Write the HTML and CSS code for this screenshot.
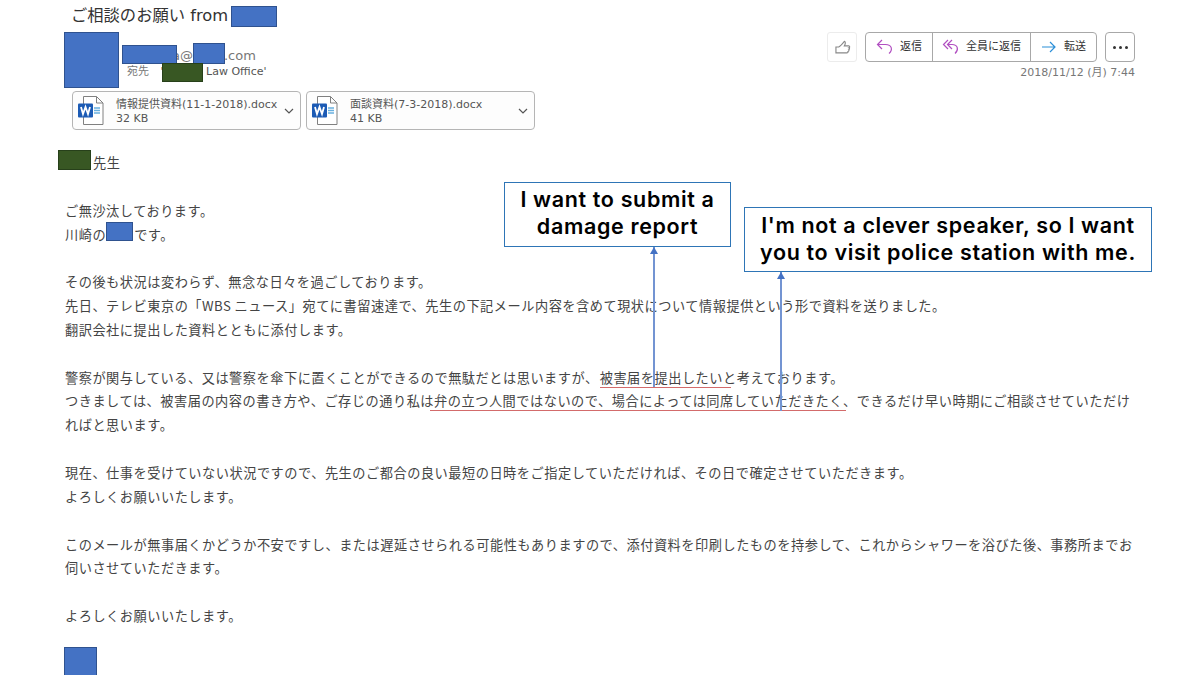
FILE: index.html
```html
<!DOCTYPE html>
<html lang="ja">
<head>
    <meta charset="UTF-8">
    <title>ご相談のお願い</title>
    <link rel="stylesheet" href="styles.css">
</head>
<body>

    <h1>ご相談のお願い from <span class="mask mask-title"></span></h1>

    <header>
        <div class="avatar mask"></div>
        <div class="sender">
            <div class="address">a@<span class="domain">.com</span></div>
            <div class="to">宛先 <span class="office">' <b>Law Office'</b></span></div>
            <span class="mask mask-user"></span>
            <span class="mask mask-domain"></span>
            <span class="mask green mask-office"></span>
        </div>
        <div class="actions">
            <div class="buttons">
                <button class="like">
                    <svg width="17" height="15" viewBox="0 0 18 16"><path d="M2 7.500h3c2-1 4-3.500 6-6 1.500.5 1.200 2.500 0 4.700h4.500c1.500.2 1.500 1.900.4 2.200 1 .5.700 1.800-.3 2 .6.700.2 1.700-.8 1.800.3 1-.2 1.500-1.200 1.500H2z"/></svg>
                </button>
                <div class="group">
                    <button class="reply">
                        <svg width="17" height="16" viewBox="0 0 17 16"><path d="M6 1 1.500 5.500 6 10M1.500 5.500h8c6.500 0 7.500 5.500 3.500 9"/></svg>返信
                    </button>
                    <button class="reply-all">
                        <svg width="17" height="16" viewBox="0 0 17 16"><path d="M6 1 1.500 5.500 6 10M10 1 5.500 5.500 10 10M5.500 5.500h4.500c6 0 7 5.500 3 9"/></svg>全員に返信
                    </button>
                    <button class="forward">
                        <svg width="16" height="12" viewBox="0 0 16 12"><path d="M1 6h13M9 1l5 5-5 5"/></svg>転送
                    </button>
                </div>
                <button class="more"><i></i><i></i><i></i></button>
            </div>
            <div class="date">2018/11/12 (月) 7:44</div>
        </div>
    </header>

    <div class="attachments">
        <div class="file">
            <svg class="word" width="27" height="29" viewBox="0 0 27 29">
                <path class="page" d="M5.500.5h13l6.500 6.500v21.500H5.500zM18.500.5V7H25"/>
                <path class="rows" d="M16 12h6M16 14.500h6M16 17h6"/>
                <rect class="tile" x="0" y="7.500" width="15" height="14" rx="1"/>
                <path class="w" d="m3 11 2 7 2.500-7L10 18l2-7"/>
            </svg>
            <div class="info">情報提供資料(11-1-2018).docx<br>32 KB</div>
            <svg class="chevron" width="10" height="6" viewBox="0 0 10 6"><path d="m1 1 4 4 4-4"/></svg>
        </div>
        <div class="file">
            <svg class="word" width="27" height="29" viewBox="0 0 27 29">
                <path class="page" d="M5.500.5h13l6.500 6.500v21.500H5.500zM18.500.5V7H25"/>
                <path class="rows" d="M16 12h6M16 14.500h6M16 17h6"/>
                <rect class="tile" x="0" y="7.500" width="15" height="14" rx="1"/>
                <path class="w" d="m3 11 2 7 2.500-7L10 18l2-7"/>
            </svg>
            <div class="info">面談資料(7-3-2018).docx<br>41 KB</div>
            <svg class="chevron" width="10" height="6" viewBox="0 0 10 6"><path d="m1 1 4 4 4-4"/></svg>
        </div>
    </div>

    <main>
        <p><span class="mask green mask-name"></span>先生</p>
        <p>ご無沙汰しております。<br>
        川崎の<span class="mask mask-me"></span>です。</p>
        <p>その後も状況は変わらず、無念な日々を過ごしております。<br>
        先日、テレビ東京の「<span class="latin">WBS </span>ニュース」宛てに書留速達で、先生の下記メール内容を含めて現状について情報提供という形で資料を送りました。<br>
        翻訳会社に提出した資料とともに添付します。</p>
        <p>警察が関与している、又は警察を傘下に置くことができるので無駄だとは思いますが、<span class="marked short">被害届を提出したい</span>と考えております。<br>
        つきましては、被害届の内容の書き方や、ご存じの通り私は<span class="marked long">弁の立つ人間ではないので、場合によっては同席していただきたく</span>、できるだけ早い時期にご相談させていただけ<br>
        ればと思います。</p>
        <p>現在、仕事を受けていない状況ですので、先生のご都合の良い最短の日時をご指定していただければ、その日で確定させていただきます。<br>
        よろしくお願いいたします。</p>
        <p>このメールが無事届くかどうか不安ですし、または遅延させられる可能性もありますので、添付資料を印刷したものを持参して、これからシャワーを浴びた後、事務所までお<br>
        伺いさせていただきます。</p>
        <p>よろしくお願いいたします。</p>
        <div class="mask signature"></div>
    </main>

    <!-- translated notes over the mail -->
    <div class="note report">I want to submit a<br>damage report</div>
    <div class="note visit">I'm not a clever speaker, so I want<br>you to visit police station with me.</div>
    <div class="arrow arrow-report"></div>
    <div class="arrow arrow-visit"></div>

</body>
</html>
```
FILE: styles.css
```css
* { box-sizing: border-box; }

body {
    margin: 0;
    width: 1200px;
    height: 675px;
    padding: 5px 65px 0 64px;
    position: relative;
    overflow: hidden;
    background: white;
    color: #444;
    font: 11px/14px "DejaVu Sans", "Noto Sans CJK JP", sans-serif;
    white-space: nowrap;
}

h1 {
    display: flex;
    align-items: center;
    height: 22px;
    margin: 0;
    padding-left: 7px;
    font-size: 16.300px;
    font-weight: normal;
    color: #333;
    white-space: pre;
}

.mask {
    display: inline-block;
    background: #4472c4;
    border: 1px solid #2f528f;
}

.green {
    background: #385723;
    border-color: #27401a;
}

.mask-title {
    width: 46px;
    height: 21px;
    margin-left: -2px;
}

header {
    display: flex;
    height: 61px;
    padding-top: 5px;
}

.avatar {
    width: 55px;
    height: 56px;
}

.sender {
    position: relative;
    width: 180px;
    padding: 16px 0 0 8px;
    color: #777;
}

.address {
    height: 17px;
    padding-left: 45px;
    font-size: 13px;
    line-height: 16px;
}

.domain { margin-left: 31px; }

.office { margin-left: 8px; color: #555; }
.office b { margin-left: 39px; font-weight: normal; }

.sender .mask { position: absolute; }
.mask-user { left: 3px; top: 13px; width: 55px; height: 19px; }
.mask-domain { left: 74px; top: 11px; width: 32px; height: 21px; }
.mask-office { left: 43px; top: 31px; width: 41px; height: 19px; }

.actions { margin-left: auto; }

.buttons {
    display: flex;
    justify-content: flex-end;
    gap: 8px;
    height: 30px;
}

.group {
    display: flex;
    border: 1px solid #a8a8a8;
    border-radius: 4px;
}

button {
    display: flex;
    align-items: center;
    justify-content: center;
    gap: 7px;
    padding: 0;
    border: 0;
    background: none;
    color: #333;
    font: inherit;
}

button svg, .chevron { fill: none; stroke: #888; stroke-width: 1.200; }

.like {
    width: 30px;
    border: 1px solid #ececec;
    border-radius: 3px;
}

.reply { width: 66px; }
.reply-all { width: 98px; border-left: 1px solid #a8a8a8; }
.forward { width: 66px; border-left: 1px solid #a8a8a8; }
.reply svg, .reply-all svg { stroke: #b14fc1; }
.forward svg { stroke: #2b8fd8; }

.more {
    width: 30px;
    gap: 3px;
    border: 1px solid #a8a8a8;
    border-radius: 4px;
}

.more i {
    width: 3px;
    height: 3px;
    border-radius: 50%;
    background: #333;
}

.date {
    margin-top: 4px;
    text-align: right;
    color: #777;
}

.attachments {
    display: flex;
    gap: 5px;
    padding: 3px 0 0 8px;
}

.file {
    display: flex;
    align-items: center;
    width: 229px;
    height: 39px;
    padding: 0 6px 0 5px;
    border: 1px solid #b5b5b5;
    border-radius: 4px;
    background: #fdfdfd;
}

.info { margin: 2px 0 0 11px; color: #555; }
.chevron { margin-left: auto; stroke: #555; }

.page { fill: white; stroke: #808080; }
.rows { stroke: #68b0df; stroke-width: 1.500; }
.tile { fill: #1c5bb5; }
.w { fill: none; stroke: white; stroke-width: 1.800; }

main {
    padding: 20px 0 0 1px;
    font-family: "Noto Sans CJK JP", sans-serif;
    font-size: 13.200px;
    line-height: 23.850px;
    letter-spacing: 0.520px;
    color: #444;
}

p { margin: 0 0 23.850px; }

.mask-name {
    width: 33px;
    height: 20px;
    margin: 0 2px 0 -7px;
    vertical-align: -2px;
}

.mask-me {
    width: 27px;
    height: 19px;
    margin: -3px 1px 0 0;
    vertical-align: -1px;
}

.latin { letter-spacing: 0.400px; }

.marked {
    background: linear-gradient(#d36b6b, #d36b6b) 0 100% / 100% 1px no-repeat;
    padding-bottom: 1px;
}

.short {
    margin: 0 -8px 0 1px;
    padding-right: 8px;
}

.long {
    margin: 0 -3px 0 -4px;
    padding: 0 3px 1px 4px;
}

.signature {
    display: block;
    width: 33px;
    height: 29px;
    margin: -5px 0 0 -1px;
}

.note {
    position: absolute;
    background: white;
    border: 1px solid #2e75b6;
    color: black;
    font: 600 21.500px/27px Inter, sans-serif;
    letter-spacing: 0.650px;
    text-align: center;
}

.report { left: 504px; top: 182px; width: 227px; height: 65px; padding-top: 3px; }
.visit { left: 744px; top: 207px; width: 408px; height: 65px; padding-top: 4px; }

.arrow {
    position: absolute;
    width: 2px;
    background: #7394d2;
}

.arrow::before {
    content: "";
    position: absolute;
    left: -3px;
    top: 0;
    border: solid transparent;
    border-width: 0 4px 7px;
    border-bottom-color: #4472c4;
}

.arrow-report { left: 653px; top: 247px; height: 140px; }
.arrow-visit { left: 780px; top: 272px; height: 139px; }
```
